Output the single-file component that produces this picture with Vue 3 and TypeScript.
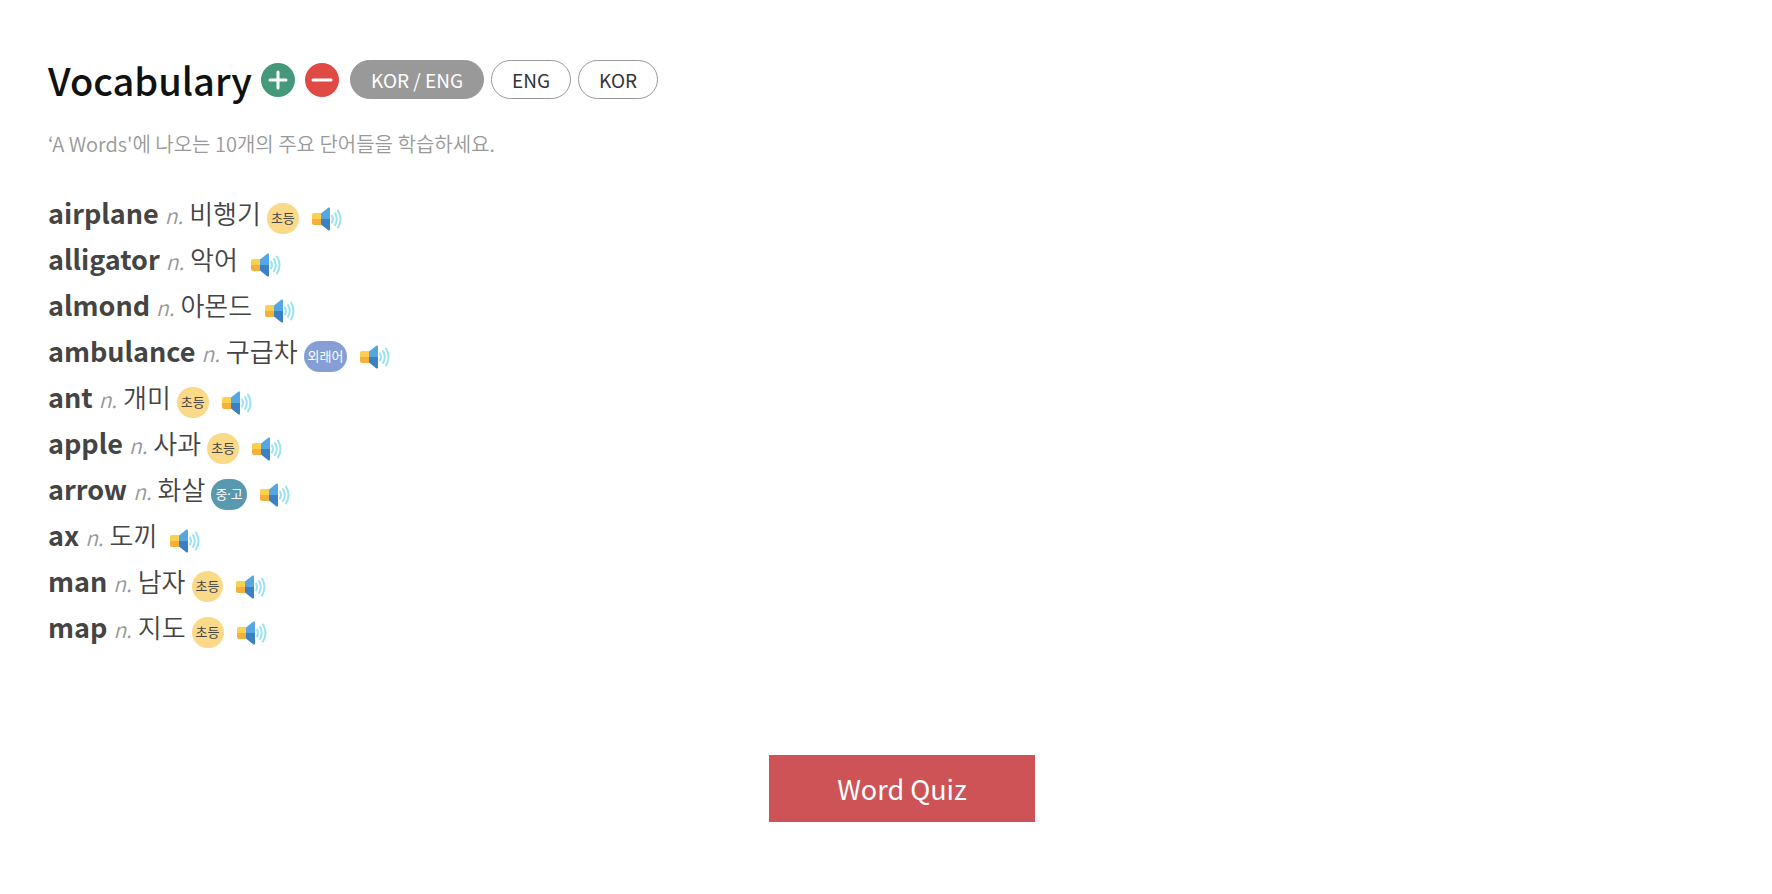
<script setup lang="ts">
import { ref } from 'vue'

type Level = 'basic' | 'advanced' | 'loan'
type Mode = 'both' | 'eng' | 'kor'

interface Word {
  word: string
  meaning: string
  level?: Level
}

const levelNames: Record<Level, string> = {
  basic: '초등',
  advanced: '중·고',
  loan: '외래어',
}

const modes: { id: Mode; label: string }[] = [
  { id: 'both', label: 'KOR / ENG' },
  { id: 'eng', label: 'ENG' },
  { id: 'kor', label: 'KOR' },
]

const words: Word[] = [
  { word: 'airplane', meaning: '비행기', level: 'basic' },
  { word: 'alligator', meaning: '악어' },
  { word: 'almond', meaning: '아몬드' },
  { word: 'ambulance', meaning: '구급차', level: 'loan' },
  { word: 'ant', meaning: '개미', level: 'basic' },
  { word: 'apple', meaning: '사과', level: 'basic' },
  { word: 'arrow', meaning: '화살', level: 'advanced' },
  { word: 'ax', meaning: '도끼' },
  { word: 'man', meaning: '남자', level: 'basic' },
  { word: 'map', meaning: '지도', level: 'basic' },
]

const mode = ref<Mode>('both')
</script>

<template>
  <main class="page">
    <header class="head">
      <h1>Vocabulary</h1>
      <div class="sizes">
        <button type="button" class="round add" aria-label="Larger text">
          <svg viewBox="0 0 34 34"><path d="M17 9v16M9 17h16" /></svg>
        </button>
        <button type="button" class="round remove" aria-label="Smaller text">
          <svg viewBox="0 0 34 34"><path d="M8 17h18" /></svg>
        </button>
      </div>
      <div class="modes">
        <button
          v-for="m in modes"
          :key="m.id"
          type="button"
          class="mode"
          :class="{ active: mode === m.id }"
          :aria-pressed="mode === m.id"
          @click="mode = m.id"
        >{{ m.label }}</button>
      </div>
    </header>

    <p class="intro">‘A Words'에 나오는 10개의 주요 단어들을 학습하세요.</p>

    <ul class="words">
      <li v-for="w in words" :key="w.word">
        <div class="entry">
          <strong v-show="mode !== 'kor'">{{ w.word }}</strong>
          <em>n.</em>
          <span v-show="mode !== 'eng'" class="meaning">{{ w.meaning }}</span>
        </div>
        <span v-if="w.level" class="badge" :class="w.level">{{ levelNames[w.level] }}</span>
        <button type="button" class="speak" :aria-label="'Listen to ' + w.word">
          <svg viewBox="0 0 30 24">
            <path fill="#fbd04f" d="M2 6h7v6H0V8q0-2 2-2z" />
            <path fill="#f5b03c" d="M0 12h9v6H2q-2 0-2-2z" />
            <path fill="#55a6e2" d="M9 6.500L16.500.600Q18 0 18 1.500V12H9z" />
            <path fill="#3b80c3" d="M9 12h9v10.500q0 1.500-1.500.900L9 17.500z" />
            <g fill="none" stroke="#9be3f2" stroke-width="2" stroke-linecap="round">
              <path d="M20 8.500q2 3.500 0 7" />
              <path d="M23 6q3.500 6 0 12" />
              <path d="M26 3.500q5 8.500 0 17" />
            </g>
          </svg>
        </button>
      </li>
    </ul>

    <button type="button" class="quiz">Word Quiz</button>
  </main>
</template>

<style>
body {
  margin: 0;
  background: #fff;
}
</style>

<style scoped>
.page {
  display: flex;
  flex-direction: column;
  padding: 52px 16px 72px 48px;
  color: #444;
  font-family: 'Noto Sans CJK KR', 'Noto Sans', sans-serif;
}

button {
  padding: 0;
  border: 0;
  background: none;
  font: inherit;
  cursor: pointer;
}

svg {
  display: block;
  width: 100%;
  height: 100%;
}

.head {
  display: flex;
  align-items: center;
  height: 55px;
}

h1 {
  margin: 0;
  color: #111;
  font-size: 38px;
  font-weight: 500;
  line-height: 55px;
}

.sizes {
  display: flex;
  gap: 10px;
  margin: 0 11px 0 9px;
}

.round {
  width: 34px;
  height: 34px;
  border-radius: 50%;
}

.round path {
  fill: none;
  stroke: #fff;
  stroke-width: 3;
  stroke-linecap: round;
}

.add {
  background: #44997a;
}

.remove {
  background: #e04a44;
}

.modes {
  display: flex;
  gap: 7px;
}

.mode {
  box-sizing: border-box;
  height: 39px;
  padding: 0 20px;
  border: 1px solid #999;
  border-radius: 20px;
  color: #333;
  font-size: 19px;
  line-height: 37px;
}

.mode.active {
  background: #999;
  color: #fff;
}

.intro {
  margin: 21px 0 0;
  color: #999;
  font-size: 20px;
  font-weight: 350;
  line-height: 32px;
}

.words {
  margin: 32px 0 0;
  padding: 0;
  list-style: none;
}

.words li {
  display: flex;
  align-items: center;
  height: 46px;
}

.entry {
  display: flex;
  align-items: baseline;
  gap: 6px;
  padding-bottom: 6px;
}

strong {
  font-size: 27px;
  font-weight: 700;
}

em {
  color: #999;
  font-size: 21px;
  font-weight: 350;
}

.meaning {
  font-size: 26px;
  font-weight: 350;
}

.badge {
  margin: 6px 0 0 6px;
  padding: 0 4px;
  border-radius: 16px;
  color: #fff;
  font-family: 'Noto Sans', 'Noto Sans CJK KR', sans-serif;
  font-size: 13px;
  line-height: 31px;
}

.basic {
  background: #fad988;
  color: #444;
}

.advanced {
  background: #5899af;
}

.loan {
  background: #859fd6;
}

.speak {
  width: 30px;
  height: 24px;
  margin: 7px 0 0 13px;
}

.quiz {
  align-self: center;
  width: 266px;
  margin-top: 103px;
  background: #cd5356;
  color: #fff;
  font-size: 27px;
  line-height: 67px;
}
</style>
